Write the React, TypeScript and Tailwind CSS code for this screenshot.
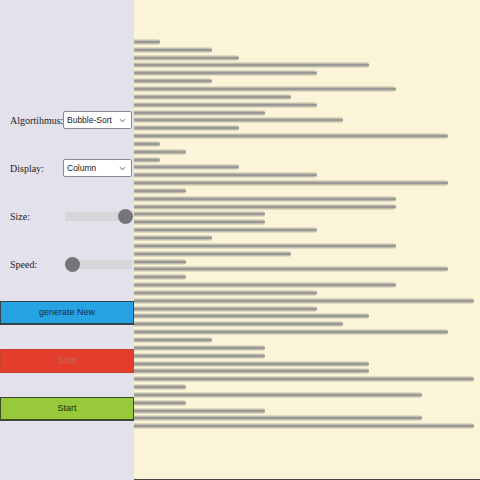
import React from "react";

const values = [1,3,4,9,7,3,10,6,7,5,8,4,12,1,2,1,4,7,12,2,10,10,5,5,7,3,10,6,2,12,2,10,7,13,7,9,8,12,3,5,5,9,9,13,2,11,2,5,11,13];

function Chevron() {
  return (
    <svg width="7" height="5" viewBox="0 0 8 6" className="absolute right-[5px] top-[6px]">
      <path d="M1 1.5 L4 4.5 L7 1.5" fill="none" stroke="#555" strokeWidth="1.2" />
    </svg>
  );
}

function Select({ text }: { text: string }) {
  return (
    <div className="relative w-[69px] h-[18px] bg-white border border-[#8a8a8a] rounded-[2px] flex items-center pl-[3px] text-[8.5px] text-[#222]" style={{ fontFamily: '"Liberation Sans", Arial, sans-serif' }}>
      {text}
      <Chevron />
    </div>
  );
}

function Slider({ pos }: { pos: number }) {
  return (
    <div className="relative w-[67px] h-[9px] bg-[#d6d5d9]">
      <div className="absolute top-[-3px] w-[15px] h-[15px] rounded-full bg-[#76767a]" style={{ left: pos }} />
    </div>
  );
}

export default function App() {
  const serif = { fontFamily: '"Liberation Serif", "Times New Roman", serif' };
  const sans = { fontFamily: '"Liberation Sans", Arial, sans-serif' };
  return (
    <div className="w-[480px] h-[480px] flex overflow-hidden">
      <div className="w-[134px] h-full bg-[#e3e1eb] flex flex-col pt-[96px]">
        <div className="h-[48px] flex items-center pl-[10px] pr-[2px]" style={serif}>
          <span className="text-[10px] text-[#222] w-[53px]">Algortihmus:</span>
          <Select text="Bubble-Sort" />
        </div>
        <div className="h-[48px] flex items-center pl-[10px] pr-[2px]" style={serif}>
          <span className="text-[10px] text-[#222] w-[53px]">Display:</span>
          <Select text="Column" />
        </div>
        <div className="h-[48px] flex items-center pl-[10px]" style={serif}>
          <span className="text-[10px] text-[#222] w-[55px]">Size:</span>
          <Slider pos={53} />
        </div>
        <div className="h-[48px] flex items-center pl-[10px]" style={serif}>
          <span className="text-[10px] text-[#222] w-[55px]">Speed:</span>
          <Slider pos={0} />
        </div>
        <div className="h-[48px] flex items-center pt-[2px]">
          <div className="w-[134px] h-[24px] bg-[#25a3e2] border border-[#34434a] border-b-2 flex items-center justify-center text-[9px] text-[#15304a]" style={sans}>generate New</div>
        </div>
        <div className="h-[48px] flex items-center pt-[2px]">
          <div className="w-[134px] h-[24px] bg-[#e33d2b] border border-[#c9402f] flex items-center justify-center text-[9px] text-[#c96a5e]" style={sans}>Stop</div>
        </div>
        <div className="h-[48px] flex items-center pt-[2px]">
          <div className="w-[134px] h-[24px] bg-[#97c93a] border border-[#3d4a30] border-b-2 flex items-center justify-center text-[9px] text-[#1d2a10]" style={sans}>Start</div>
        </div>
      </div>
      <div className="flex-1 h-full bg-[#fcf4d8] border-b border-[#444] pt-[38px]">
        <div className="h-[392px] flex flex-col">
          {values.map((v, i) => (
            <div key={i} className="flex-1 flex items-center">
              <div
                className="h-[6px] rounded-r-[3px] bg-[linear-gradient(to_bottom,#ece6cc,#cdc8b3_20%,#999894_42%,#8c8c8c_50%,#999894_58%,#cdc8b3_80%,#ece6cc)]"
                style={{ width: v * 26.15 }}
              />
            </div>
          ))}
        </div>
      </div>
    </div>
  );
}
